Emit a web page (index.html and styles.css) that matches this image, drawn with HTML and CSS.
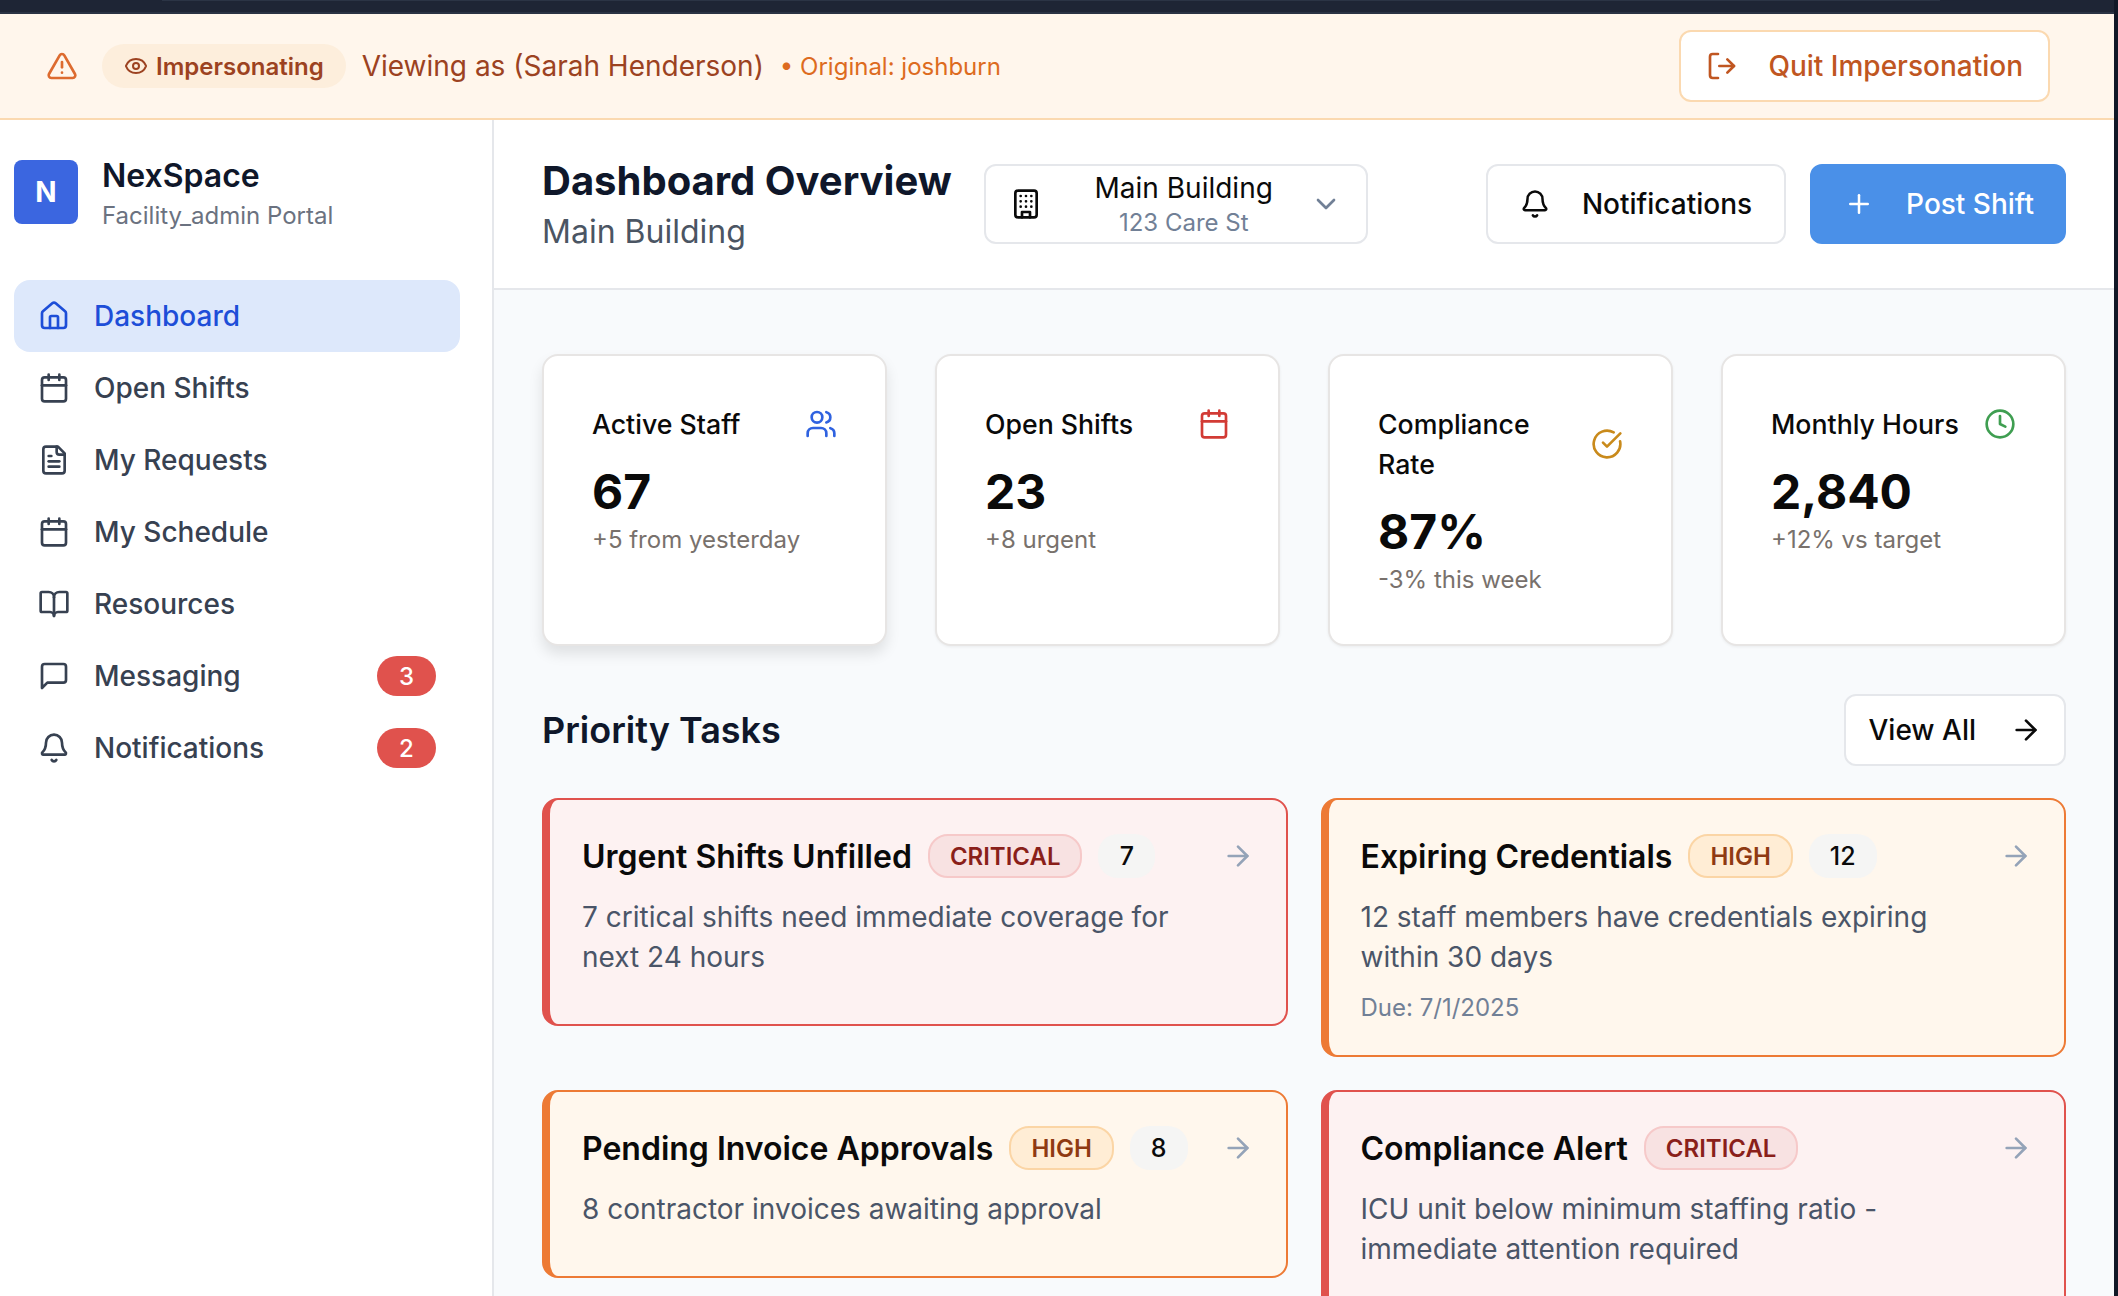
FILE: index.html
```html
<!DOCTYPE html>
<html lang="en">
  <head>
    <meta charset="UTF-8" />
    <meta name="viewport" content="width=device-width, initial-scale=1.0" />
    <title>NexSpace Dashboard</title>
    <link rel="stylesheet" href="styles.css">
  </head>
  <body>
    <svg class="sprite" xmlns="http://www.w3.org/2000/svg">
      <symbol id="i-alert" viewBox="0 0 24 24"><path d="m21.73 18-8-14a2 2 0 0 0-3.48 0l-8 14A2 2 0 0 0 4 21h16a2 2 0 0 0 1.73-3"/><path d="M12 9v4"/><path d="M12 17h.01"/></symbol>
      <symbol id="i-eye" viewBox="0 0 24 24"><path d="M2.06 12.35a1 1 0 0 1 0-.7 10.75 10.75 0 0 1 19.88 0 1 1 0 0 1 0 .7 10.75 10.75 0 0 1-19.88 0"/><circle cx="12" cy="12" r="3"/></symbol>
      <symbol id="i-logout" viewBox="0 0 24 24"><path d="M9 21H5a2 2 0 0 1-2-2V5a2 2 0 0 1 2-2h4"/><path d="M10 12h11"/><path d="m16 7 5 5-5 5"/></symbol>
      <symbol id="i-building" viewBox="0 0 24 24"><rect x="4" y="2" width="16" height="20" rx="2"/><path d="M9 22v-4h6v4"/><path d="M8 6h.01M12 6h.01M16 6h.01M8 10h.01M12 10h.01M16 10h.01M8 14h.01M12 14h.01M16 14h.01"/></symbol>
      <symbol id="i-chevron" viewBox="0 0 24 24"><path d="m6 9 6 6 6-6"/></symbol>
      <symbol id="i-bell" viewBox="0 0 24 24"><path d="M10.27 21a2 2 0 0 0 3.46 0"/><path d="M3.26 15.33A1 1 0 0 0 4 17h16a1 1 0 0 0 .74-1.67C19.41 13.96 18 12.5 18 8A6 6 0 0 0 6 8c0 4.5-1.41 5.96-2.74 7.33"/></symbol>
      <symbol id="i-plus" viewBox="0 0 24 24"><path d="M5 12h14"/><path d="M12 5v14"/></symbol>
      <symbol id="i-home" viewBox="0 0 24 24"><path d="M15 21v-8a1 1 0 0 0-1-1h-4a1 1 0 0 0-1 1v8"/><path d="M3 10a2 2 0 0 1 .71-1.53l7-6a2 2 0 0 1 2.58 0l7 6A2 2 0 0 1 21 10v9a2 2 0 0 1-2 2H5a2 2 0 0 1-2-2z"/></symbol>
      <symbol id="i-calendar" viewBox="0 0 24 24"><path d="M8 2v4"/><path d="M16 2v4"/><rect x="3" y="4" width="18" height="18" rx="2"/><path d="M3 10h18"/></symbol>
      <symbol id="i-file" viewBox="0 0 24 24"><path d="M15 2H6a2 2 0 0 0-2 2v16a2 2 0 0 0 2 2h12a2 2 0 0 0 2-2V7z"/><path d="M14 2v4a2 2 0 0 0 2 2h4"/><path d="M10 9H8"/><path d="M16 13H8"/><path d="M16 17H8"/></symbol>
      <symbol id="i-book" viewBox="0 0 24 24"><path d="M12 7v14"/><path d="M3 18a1 1 0 0 1-1-1V4a1 1 0 0 1 1-1h5a4 4 0 0 1 4 4 4 4 0 0 1 4-4h5a1 1 0 0 1 1 1v13a1 1 0 0 1-1 1h-6a3 3 0 0 0-3 3 3 3 0 0 0-3-3z"/></symbol>
      <symbol id="i-message" viewBox="0 0 24 24"><path d="M21 15a2 2 0 0 1-2 2H7l-4 4V5a2 2 0 0 1 2-2h14a2 2 0 0 1 2 2z"/></symbol>
      <symbol id="i-users" viewBox="0 0 24 24"><path d="M16 21v-2a4 4 0 0 0-4-4H6a4 4 0 0 0-4 4v2"/><circle cx="9" cy="7" r="4"/><path d="M22 21v-2a4 4 0 0 0-3-3.87"/><path d="M16 3.13a4 4 0 0 1 0 7.75"/></symbol>
      <symbol id="i-check" viewBox="0 0 24 24"><path d="M21.8 10A10 10 0 1 1 17 3.34"/><path d="m9 11 3 3L22 4"/></symbol>
      <symbol id="i-clock" viewBox="0 0 24 24"><circle cx="12" cy="12" r="10"/><path d="M12 6v6l4 2"/></symbol>
      <symbol id="i-arrow" viewBox="0 0 24 24"><path d="M5 12h14"/><path d="m12 5 7 7-7 7"/></symbol>
    </svg>

    <div class="app">
      <div class="topbar"><div class="topbar-line"></div></div>

      <div class="banner">
        <div class="banner-left">
          <svg class="icon banner-alert"><use href="#i-alert"/></svg>
          <span class="imp-pill"><svg class="icon"><use href="#i-eye"/></svg>Impersonating</span>
          <span class="viewing">Viewing as (Sarah Henderson)</span>
          <span class="original">• Original: joshburn</span>
        </div>
        <button class="quit-btn"><svg class="icon"><use href="#i-logout"/></svg>Quit Impersonation</button>
      </div>

      <div class="layout">
        <aside class="sidebar">
          <div class="brand">
            <div class="brand-logo">N</div>
            <div class="brand-text">
              <div class="brand-name">NexSpace</div>
              <div class="brand-sub">Facility_admin Portal</div>
            </div>
          </div>
          <nav class="nav">
            <a class="nav-item active"><svg class="icon"><use href="#i-home"/></svg>Dashboard</a>
            <a class="nav-item"><svg class="icon"><use href="#i-calendar"/></svg>Open Shifts</a>
            <a class="nav-item"><svg class="icon"><use href="#i-file"/></svg>My Requests</a>
            <a class="nav-item"><svg class="icon"><use href="#i-calendar"/></svg>My Schedule</a>
            <a class="nav-item"><svg class="icon"><use href="#i-book"/></svg>Resources</a>
            <a class="nav-item"><svg class="icon"><use href="#i-message"/></svg>Messaging<span class="nav-badge">3</span></a>
            <a class="nav-item"><svg class="icon"><use href="#i-bell"/></svg>Notifications<span class="nav-badge">2</span></a>
          </nav>
        </aside>

        <div class="main">
          <header class="header">
            <div class="header-title">
              <h1>Dashboard Overview</h1>
              <p>Main Building</p>
            </div>
            <button class="select">
              <svg class="icon"><use href="#i-building"/></svg>
              <span class="select-text">
                <span class="select-name">Main Building</span>
                <span class="select-addr">123 Care St</span>
              </span>
              <svg class="icon select-chevron"><use href="#i-chevron"/></svg>
            </button>
            <div class="header-actions">
              <button class="btn"><svg class="icon"><use href="#i-bell"/></svg>Notifications</button>
              <button class="btn btn-primary"><svg class="icon"><use href="#i-plus"/></svg>Post Shift</button>
            </div>
          </header>

          <div class="content">
            <div class="stats">
              <div class="stat-card raised">
                <div class="stat-head"><span>Active Staff</span><svg class="icon blue"><use href="#i-users"/></svg></div>
                <div class="stat-value">67</div>
                <div class="stat-note">+5 from yesterday</div>
              </div>
              <div class="stat-card">
                <div class="stat-head"><span>Open Shifts</span><svg class="icon red"><use href="#i-calendar"/></svg></div>
                <div class="stat-value">23</div>
                <div class="stat-note">+8 urgent</div>
              </div>
              <div class="stat-card">
                <div class="stat-head"><span>Compliance Rate</span><svg class="icon amber"><use href="#i-check"/></svg></div>
                <div class="stat-value">87%</div>
                <div class="stat-note">-3% this week</div>
              </div>
              <div class="stat-card">
                <div class="stat-head"><span>Monthly Hours</span><svg class="icon green"><use href="#i-clock"/></svg></div>
                <div class="stat-value">2,840</div>
                <div class="stat-note">+12% vs target</div>
              </div>
            </div>

            <div class="section-head">
              <h2>Priority Tasks</h2>
              <button class="btn btn-small">View All<svg class="icon"><use href="#i-arrow"/></svg></button>
            </div>

            <div class="tasks">
              <div class="task critical">
                <div class="task-head">
                  <span class="task-title">Urgent Shifts Unfilled</span>
                  <span class="tag">CRITICAL</span>
                  <span class="count">7</span>
                  <svg class="icon task-arrow"><use href="#i-arrow"/></svg>
                </div>
                <p class="task-desc">7 critical shifts need immediate coverage for next 24 hours</p>
              </div>
              <div class="task high">
                <div class="task-head">
                  <span class="task-title">Expiring Credentials</span>
                  <span class="tag">HIGH</span>
                  <span class="count">12</span>
                  <svg class="icon task-arrow"><use href="#i-arrow"/></svg>
                </div>
                <p class="task-desc">12 staff members have credentials expiring within 30 days</p>
                <p class="task-due">Due: 7/1/2025</p>
              </div>
              <div class="task high">
                <div class="task-head">
                  <span class="task-title">Pending Invoice Approvals</span>
                  <span class="tag">HIGH</span>
                  <span class="count">8</span>
                  <svg class="icon task-arrow"><use href="#i-arrow"/></svg>
                </div>
                <p class="task-desc">8 contractor invoices awaiting approval</p>
              </div>
              <div class="task critical">
                <div class="task-head">
                  <span class="task-title">Compliance Alert</span>
                  <span class="tag">CRITICAL</span>
                  <svg class="icon task-arrow"><use href="#i-arrow"/></svg>
                </div>
                <p class="task-desc">ICU unit below minimum staffing ratio - immediate attention required</p>
              </div>
            </div>
          </div>
        </div>
      </div>
    </div>
  </body>
</html>
```

FILE: styles.css
```css
* {
  box-sizing: border-box;
}
html, body {
  height: 100%;
}
body {
  margin: 0;
  padding-right: 4px;
  overflow: hidden;
  background: #111827;
  font-family: Inter, "Noto Sans", sans-serif;
  color: #0f172a;
}
.sprite {
  display: none;
}
.icon {
  width: 32px;
  height: 32px;
  flex: none;
  fill: none;
  stroke: currentColor;
  stroke-width: 2;
  stroke-linecap: round;
  stroke-linejoin: round;
}
button {
  font-family: inherit;
  cursor: pointer;
}
.app {
  height: 100%;
  background: #fff;
}

/* strip above the banner */
.topbar {
  height: 14px;
  background: #1e2535;
  border-bottom: 2px solid #2a3344;
}
.topbar-line {
  height: 1px;
  margin: 0 174px 0 162px;
  background: #2b3445;
}

/* banner */
.banner {
  height: 106px;
  display: flex;
  align-items: center;
  justify-content: space-between;
  padding: 0 64px 0 46px;
  background: #fff6ec;
  border-bottom: 2px solid #fbd9b0;
}
.banner-left {
  display: flex;
  align-items: center;
}
.banner-alert {
  color: #dd6b2f;
  margin-right: 24px;
}
.imp-pill {
  display: flex;
  align-items: center;
  gap: 8px;
  height: 44px;
  padding: 0 22px;
  margin-right: 16px;
  border-radius: 22px;
  background: #fdeedc;
  color: #9c4221;
  font-size: 24px;
  font-weight: 600;
}
.imp-pill .icon {
  width: 24px;
  height: 24px;
}
.viewing {
  font-size: 28px;
  font-weight: 400;
  color: #9c4221;
  margin-right: 16px;
}
.original {
  font-size: 24px;
  color: #dd6b20;
}
.quit-btn {
  display: flex;
  align-items: center;
  gap: 30px;
  height: 72px;
  padding: 0 25px;
  background: #fff;
  border: 2px solid #fbd9b0;
  border-radius: 12px;
  color: #c05621;
  font-size: 28px;
  font-weight: 500;
}

/* sidebar */
.layout {
  display: flex;
  height: 1176px;
}
.sidebar {
  width: 494px;
  flex: none;
  padding: 29px 32px 0 14px;
  border-right: 2px solid #e5e7eb;
  background: #fff;
}
.brand {
  display: flex;
  align-items: center;
  gap: 24px;
  margin-bottom: 45px;
}
.brand-logo {
  width: 64px;
  height: 64px;
  display: flex;
  align-items: center;
  justify-content: center;
  border-radius: 8px;
  background: #3b66e0;
  color: #fff;
  font-size: 28px;
  font-weight: 700;
}
.brand-text {
  padding-top: 6px;
}
.brand-name {
  font-size: 32px;
  font-weight: 600;
  line-height: 42px;
}
.brand-sub {
  font-size: 24px;
  line-height: 38px;
  color: #6b7280;
}
.nav-item {
  display: flex;
  align-items: center;
  gap: 24px;
  height: 72px;
  padding: 0 24px;
  border-radius: 16px;
  color: #374151;
  font-size: 28px;
  font-weight: 500;
}
.nav-item.active {
  background: #dde8fb;
  color: #1d4ed8;
}
.nav-badge {
  margin-left: auto;
  width: 59px;
  height: 40px;
  display: flex;
  align-items: center;
  justify-content: center;
  border-radius: 20px;
  background: #e0524d;
  color: #fff;
  font-size: 24px;
}

/* header */
.main {
  flex: 1;
  min-width: 0;
  background: #f8fafc;
}
.header {
  height: 170px;
  display: flex;
  align-items: center;
  padding: 0 48px;
  background: #fff;
  border-bottom: 2px solid #e5e7eb;
}
.header-title {
  padding-top: 3px;
}
.header-title h1 {
  margin: 0;
  font-size: 40px;
  font-weight: 700;
  line-height: 52px;
}
.header-title p {
  margin: 0;
  font-size: 32px;
  line-height: 50px;
  color: #4b5563;
}
.select {
  width: 384px;
  height: 80px;
  margin-left: 32px;
  display: flex;
  align-items: center;
  padding: 0 24px;
  background: #fff;
  border: 2px solid #e5e7eb;
  border-radius: 12px;
  color: #0a0a0a;
}
.select-text {
  flex: 1;
  padding-left: 16px;
  display: flex;
  flex-direction: column;
  align-items: center;
}
.select-name {
  font-size: 28px;
  line-height: 38px;
}
.select-addr {
  font-size: 24px;
  line-height: 32px;
  color: #718096;
}
.select-chevron {
  color: #718096;
}
.header-actions {
  margin-left: auto;
  display: flex;
  gap: 24px;
}
.btn {
  height: 80px;
  display: flex;
  align-items: center;
  gap: 32px;
  padding: 0 32px;
  background: #fff;
  border: 2px solid #e5e7eb;
  border-radius: 12px;
  color: #0a0a0a;
  font-size: 28px;
  font-weight: 500;
}
.btn .icon {
  width: 30px;
  height: 30px;
}
.btn-primary {
  padding: 0 30px 0 32px;
  background: #4a90e8;
  border-color: #4a90e8;
  color: #fff;
}
.btn-small {
  height: 72px;
  gap: 34px;
  padding: 0 22px;
}
.btn-small .icon {
  width: 32px;
  height: 32px;
}

/* stats */
.content {
  padding: 64px 48px 0;
}
.stats {
  display: grid;
  grid-template-columns: repeat(4, 1fr);
  gap: 48px;
}
.stat-card {
  height: 292px;
  padding: 48px;
  background: #fff;
  border: 2px solid #e7e5e4;
  border-radius: 16px;
  box-shadow: 0 1px 3px rgba(0, 0, 0, 0.06);
}
.stat-card.raised {
  box-shadow: 0 8px 14px rgba(0, 0, 0, 0.1);
}
.stat-head {
  display: flex;
  align-items: center;
  justify-content: space-between;
  margin-bottom: 21px;
  font-size: 26.7px;
  font-weight: 500;
  line-height: 40px;
  color: #0a0a0a;
}
.stat-value {
  font-size: 48px;
  font-weight: 700;
  line-height: 54px;
  color: #0a0a0a;
}
.stat-note {
  margin-top: 3px;
  font-size: 24px;
  line-height: 36px;
  color: #78716c;
}
.blue { color: #2f62e0; }
.red { color: #d23b35; }
.amber { color: #c98a1b; }
.green { color: #3f9e51; }

/* tasks */
.section-head {
  display: flex;
  align-items: center;
  justify-content: space-between;
  margin: 48px 0 32px;
}
.section-head h2 {
  margin: 0;
  font-size: 36px;
  font-weight: 600;
}
.tasks {
  display: grid;
  grid-template-columns: 1fr 1fr;
  gap: 33px;
  align-items: start;
}
.task {
  padding: 34px 32px 29px;
  border: 2px solid;
  border-left-width: 8px;
  border-radius: 16px;
}
.task.critical {
  background: #fdf2f2;
  border-color: #e0524d;
}
.task.high {
  background: #fff7ed;
  border-color: #ed7a35;
}
.task-head {
  display: flex;
  align-items: center;
  gap: 16px;
}
.task-title {
  font-size: 32px;
  font-weight: 600;
  color: #0a0a0a;
}
.tag {
  height: 44px;
  display: flex;
  align-items: center;
  padding: 0 20px;
  border: 2px solid;
  border-radius: 20px;
  font-size: 24px;
  font-weight: 600;
}
.critical .tag {
  background: #f8e2e2;
  border-color: #f6c9c9;
  color: #8a1f1a;
}
.high .tag {
  background: #ffedd5;
  border-color: #fbd5a5;
  color: #8f3a12;
}
.count {
  height: 44px;
  min-width: 57px;
  display: flex;
  align-items: center;
  justify-content: center;
  padding: 0 21px;
  border-radius: 20px;
  background: #f5f5f4;
  font-size: 25px;
  font-weight: 500;
  color: #0a0a0a;
}
.task-arrow {
  margin-left: auto;
  color: #94a3b8;
}
.task-desc {
  margin: 19px 0 18px;
  padding-right: 56px;
  font-size: 28px;
  line-height: 40px;
  color: #4a5568;
}
.task-due {
  margin: -5px 0 0;
  font-size: 24px;
  line-height: 36px;
  color: #718096;
}
```
